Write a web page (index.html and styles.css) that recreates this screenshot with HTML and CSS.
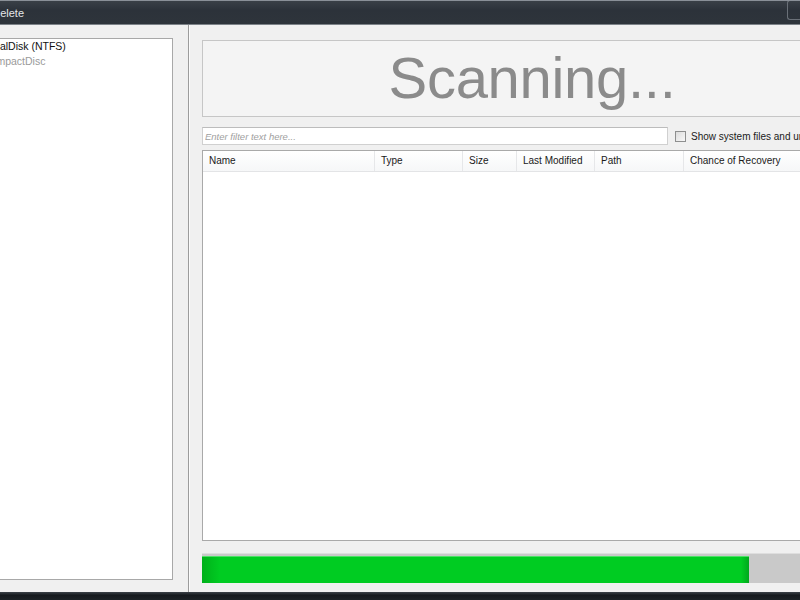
FILE: index.html
```html
<!DOCTYPE html>
<html lang="en">
<head>
  <meta charset="UTF-8" />
  <title>Undelete</title>
  <link rel="stylesheet" href="styles.css">
</head>
<body>
  <div class="titlebar">
    <span class="title">Undelete</span>
    <span class="caption-btn"></span>
  </div>

  <div class="window">
    <div class="left-pane">
      <ul class="drives">
        <li class="drive">LocalDisk (NTFS)</li>
        <li class="drive dim">CompactDisc</li>
      </ul>
    </div>

    <div class="splitter"></div>

    <div class="right-pane">
      <div class="status">Scanning...</div>

      <div class="filter-row">
        <input type="text" class="filter" placeholder="Enter filter text here..." />
        <label class="check">
          <span class="box"></span>
          Show system files and unknown files
        </label>
      </div>

      <div class="list">
        <div class="list-head">
          <div class="col col-name">Name</div>
          <div class="col col-type">Type</div>
          <div class="col col-size">Size</div>
          <div class="col col-date">Last Modified</div>
          <div class="col col-path">Path</div>
          <div class="col col-chance">Chance of Recovery</div>
        </div>
      </div>

      <div class="progress">
        <div class="progress-fill" style="width: 547px"></div>
      </div>
    </div>
  </div>

  <div class="taskbar"></div>
</body>
</html>
```

FILE: styles.css
```css
    body {
      margin: 0;
      width: 800px;
      height: 600px;
      overflow: hidden;
      background: #f0f0f0;
      font-family: 'Liberation Sans', Arial, sans-serif;
      font-size: 10px;
      color: #1a1a1a;
    }

    .titlebar {
      height: 23px;
      border-top: 1px solid #8a9098;
      border-bottom: 1px solid #7c8288;
      background: linear-gradient(to bottom, #3a4047 0%, #2c323a 40%, #2e343b 100%);
      display: flex;
      align-items: center;
      justify-content: space-between;
      overflow: hidden;
    }

    .title {
      color: #e4e6e8;
      font-size: 11px;
      text-indent: -20px;
      white-space: nowrap;
    }

    .caption-btn {
      width: 12px;
      height: 18px;
      margin-top: -6px;
      border: 1px solid #6a7078;
      border-right: none;
      border-radius: 3px 0 0 3px;
    }

    .window {
      display: flex;
      height: 567px;
    }

    .left-pane {
      width: 173px;
      padding: 13px 15px 12px 0;
      flex-shrink: 0;
    }

    .drives {
      list-style: none;
      margin: 0;
      padding: 0;
      height: 540px;
      background: #fff;
      border: 1px solid #a8a8a8;
      border-left: none;
      overflow: hidden;
    }

    .drive {
      text-indent: -17px;
      white-space: nowrap;
      line-height: 15px;
      font-size: 10.5px;
      color: #111;
    }

    .drive.dim {
      color: #9a9a9a;
    }

    .splitter {
      width: 1px;
      flex-shrink: 0;
      background: #9c9c9c;
      border-right: 1px solid #fbfbfb;
    }

    .right-pane {
      width: 660px;
      flex-shrink: 0;
      padding: 15px 0 0 12px;
    }

    .status {
      height: 75px;
      background: #f4f4f4;
      border: 1px solid #c6c6c6;
      color: #8b8b8b;
      font-size: 58px;
      letter-spacing: -0.3px;
      line-height: 73px;
      text-align: center;
    }

    .filter-row {
      display: flex;
      align-items: center;
      margin-top: 10px;
      height: 18px;
    }

    .filter {
      width: 466px;
      height: 18px;
      flex-shrink: 0;
      box-sizing: border-box;
      margin: 0;
      padding: 0 2px;
      border: 1px solid #d0d0d0;
      border-top-color: #bcbcbc;
      background: #fff;
      font-family: 'Liberation Sans', Arial, sans-serif;
      font-size: 9.5px;
    }

    .filter::placeholder {
      color: #a0a0a0;
      font-style: italic;
    }

    .check {
      display: flex;
      align-items: center;
      flex-shrink: 0;
      margin-left: 7px;
      white-space: nowrap;
      color: #1a1a1a;
    }

    .box {
      width: 11px;
      height: 11px;
      box-sizing: border-box;
      border: 1px solid #8e8f8f;
      background: linear-gradient(to bottom right, #dcdcdc, #f8f8f8);
      margin-right: 5px;
    }

    .list {
      margin-top: 5px;
      height: 389px;
      background: #fff;
      border: 1px solid #a9a9a9;
    }

    .list-head {
      display: flex;
      height: 20px;
      background: linear-gradient(to bottom, #ffffff, #f6f7f8);
      border-bottom: 1px solid #e3e4e6;
    }

    .col {
      line-height: 20px;
      padding-left: 6px;
      border-right: 1px solid #e6e7e9;
      box-sizing: border-box;
      white-space: nowrap;
    }

    .col-name { width: 172px; }
    .col-type { width: 88px; }
    .col-size { width: 54px; }
    .col-date { width: 78px; }
    .col-path { width: 89px; }
    .col-chance { width: 140px; }

    .progress {
      margin-top: 12px;
      height: 27px;
      padding: 2px 0 0;
      border-top: 1px solid #dedede;
      background: #c9c9c9;
      display: flex;
      align-items: stretch;
    }

    .progress-fill {
      background: linear-gradient(to right, #00b01a 0px, #00cc22 18px, #00cc22 calc(100% - 8px), #00a81c 100%);
      box-shadow: inset 0 1px 0 #4ee066;
    }

    .taskbar {
      height: 8px;
      background: linear-gradient(to bottom, #3c4248, #15191d 40%, #1d2226);
    }
```
